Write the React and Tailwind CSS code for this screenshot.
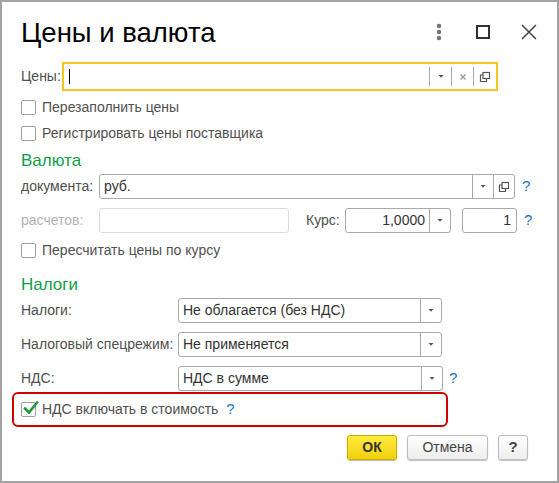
import React from "react";

const font = { fontFamily: '"Liberation Sans", Arial, sans-serif' };

function Arrow() {
  return (
    <svg width="8" height="5" viewBox="0 0 8 5"><path d="M1.5 1 L6.5 1 L4 3.8 Z" fill="#555" /></svg>
  );
}
function CopyIcon() {
  return (
    <svg width="12" height="12" viewBox="0 0 12 12" fill="none" stroke="#555" strokeWidth="1.2">
      <rect x="4" y="1.5" width="6.5" height="6" />
      <path d="M4 4 H1.5 V10.5 H7.5 V7.5" />
    </svg>
  );
}
function ClearIcon() {
  return (
    <svg width="8" height="8" viewBox="0 0 8 8" stroke="#999" strokeWidth="1.4">
      <path d="M1.5 1.5 L6.5 6.5 M6.5 1.5 L1.5 6.5" />
    </svg>
  );
}
function Checkbox({ checked }) {
  return (
    <div className="relative w-[15px] h-[15px] border border-[#a0a0a0] rounded-[2px] bg-white shrink-0">
      {checked && (
        <svg className="absolute left-[1px] top-[-3px]" width="16" height="16" viewBox="0 0 16 16">
          <path d="M2 8.5 L6 12.5 L14 2.5" fill="none" stroke="#1f9a3c" strokeWidth="2.6" strokeLinecap="square" />
        </svg>
      )}
    </div>
  );
}
function Help({ className = "" }) {
  return <span className={"text-[#1a73c8] text-[15px] " + className}>?</span>;
}
function Select({ width, value, copy = false, right = false }) {
  return (
    <div className="flex h-[25px] border border-[#a9a9a9] rounded-[3px] bg-white" style={{ width }}>
      <div className={"flex-1 flex items-center px-[4px] text-[14px] text-[#333] " + (right ? "justify-end" : "")}>
        {value}
      </div>
      <div className="w-[21px] border-l border-[#a9a9a9] flex items-center justify-center">
        <Arrow />
      </div>
      {copy && (
        <div className="w-[21px] border-l border-[#a9a9a9] flex items-center justify-center">
          <CopyIcon />
        </div>
      )}
    </div>
  );
}

export default function App() {
  return (
    <div style={font} className="w-[559px] h-[483px] border-2 border-[#a3a3a3] bg-white flex flex-col text-[#505050] text-[14px]">
      {/* header */}
      <div className="h-[60px] flex items-center pl-[19px] pr-[20px]">
        <div className="text-[27.5px] text-black flex-1 leading-none pt-[1px]">Цены и валюта</div>
        <svg width="6" height="18" viewBox="0 0 6 18" className="mr-[34px]">
          <circle cx="3" cy="3" r="2.3" fill="#777" />
          <circle cx="3" cy="9" r="2.3" fill="#777" />
          <circle cx="3" cy="15" r="2.3" fill="#777" />
        </svg>
        <svg width="14" height="14" viewBox="0 0 14 14" className="mr-[31px]">
          <rect x="1" y="1" width="12" height="12" fill="none" stroke="#333" strokeWidth="2" />
        </svg>
        <svg width="16" height="16" viewBox="0 0 16 16">
          <path d="M1 1 L15 15 M15 1 L1 15" stroke="#444" strokeWidth="1.5" />
        </svg>
      </div>

      {/* Цены */}
      <div className="flex items-center pl-[19px] h-[29px]">
        <span className="w-[41px]">Цены:</span>
        <div className="w-[436px] h-[29px] border-2 border-[#f2c81c] flex bg-white">
          <div className="flex-1 flex items-center pl-[5px]">
            <div className="w-[1px] h-[15px] bg-black" />
          </div>
          <div className="w-[22px] my-[3px] border-l border-[#a9a9a9] flex items-center justify-center">
            <Arrow />
          </div>
          <div className="w-[22px] my-[3px] border-l border-[#a9a9a9] flex items-center justify-center">
            <ClearIcon />
          </div>
          <div className="w-[23px] my-[3px] border-l border-[#a9a9a9] flex items-center justify-center">
            <CopyIcon />
          </div>
        </div>
      </div>

      {/* checkboxes */}
      <div className="flex items-center pl-[19px] h-[26px] mt-[3px] gap-[6px]">
        <Checkbox />
        <span>Перезаполнить цены</span>
      </div>
      <div className="flex items-center pl-[19px] h-[26px] gap-[6px]">
        <Checkbox />
        <span>Регистрировать цены поставщика</span>
      </div>

      {/* Валюта */}
      <div className="pl-[19px] h-[26px] mt-[2px] flex items-center text-[17px] text-[#10a04a]">Валюта</div>
      <div className="flex items-center pl-[19px] h-[25px]">
        <span className="w-[78px]">документа:</span>
        <Select width={416} value="руб." copy />
        <Help className="ml-[7px]" />
      </div>
      <div className="flex items-center pl-[19px] h-[25px] mt-[9px]">
        <span className="w-[78px] text-[#b3b3b3]">расчетов:</span>
        <div className="w-[190px] h-[25px] border border-[#dcdcdc] rounded-[3px]" />
        <span className="ml-[17px] w-[39px]">Курс:</span>
        <Select width={106} value="1,0000" right />
        <div className="ml-[11px] w-[55px] h-[25px] border border-[#a9a9a9] rounded-[3px] flex items-center justify-end pr-[5px] text-[#333]">1</div>
        <Help className="ml-[7px]" />
      </div>
      <div className="flex items-center pl-[19px] h-[26px] mt-[4px] gap-[6px]">
        <Checkbox />
        <span>Пересчитать цены по курсу</span>
      </div>

      {/* Налоги */}
      <div className="pl-[19px] h-[26px] mt-[9px] flex items-center text-[17px] text-[#10a04a]">Налоги</div>
      <div className="flex items-center pl-[19px] h-[25px]">
        <span className="w-[157px]">Налоги:</span>
        <Select width={264} value="Не облагается (без НДС)" />
      </div>
      <div className="flex items-center pl-[19px] h-[25px] mt-[9px]">
        <span className="w-[157px]">Налоговый спецрежим:</span>
        <Select width={264} value="Не применяется" />
      </div>
      <div className="flex items-center pl-[19px] h-[25px] mt-[9px]">
        <span className="w-[157px]">НДС:</span>
        <Select width={265} value="НДС в сумме" />
        <Help className="ml-[6px]" />
      </div>

      {/* red highlight */}
      <div className="ml-[10px] w-[436px] h-[35px] mt-[1px] border-2 border-[#d00000] rounded-[6px] flex items-center pl-[7px] gap-[6px]">
        <Checkbox checked />
        <span>НДС включать в стоимость</span>
        <Help className="ml-[2px]" />
      </div>

      {/* buttons */}
      <div className="flex justify-end pr-[29px] mt-[8px] gap-[10px]">
        <button className="w-[50px] h-[25px] rounded-[3px] border border-[#c9ae00] bg-gradient-to-b from-[#ffec3d] to-[#f2cf00] shadow-[0_1px_1px_rgba(0,0,0,0.3)] font-bold text-[#333] text-[14px]">ОК</button>
        <button className="w-[81px] h-[25px] rounded-[3px] border border-[#bdbdbd] bg-gradient-to-b from-white to-[#ededed] shadow-[0_1px_1px_rgba(0,0,0,0.25)] text-[#444] text-[14px]">Отмена</button>
        <button className="w-[30px] h-[25px] rounded-[3px] border border-[#bdbdbd] bg-gradient-to-b from-white to-[#ededed] shadow-[0_1px_1px_rgba(0,0,0,0.25)] font-bold text-[#444] text-[15px]">?</button>
      </div>
    </div>
  );
}
